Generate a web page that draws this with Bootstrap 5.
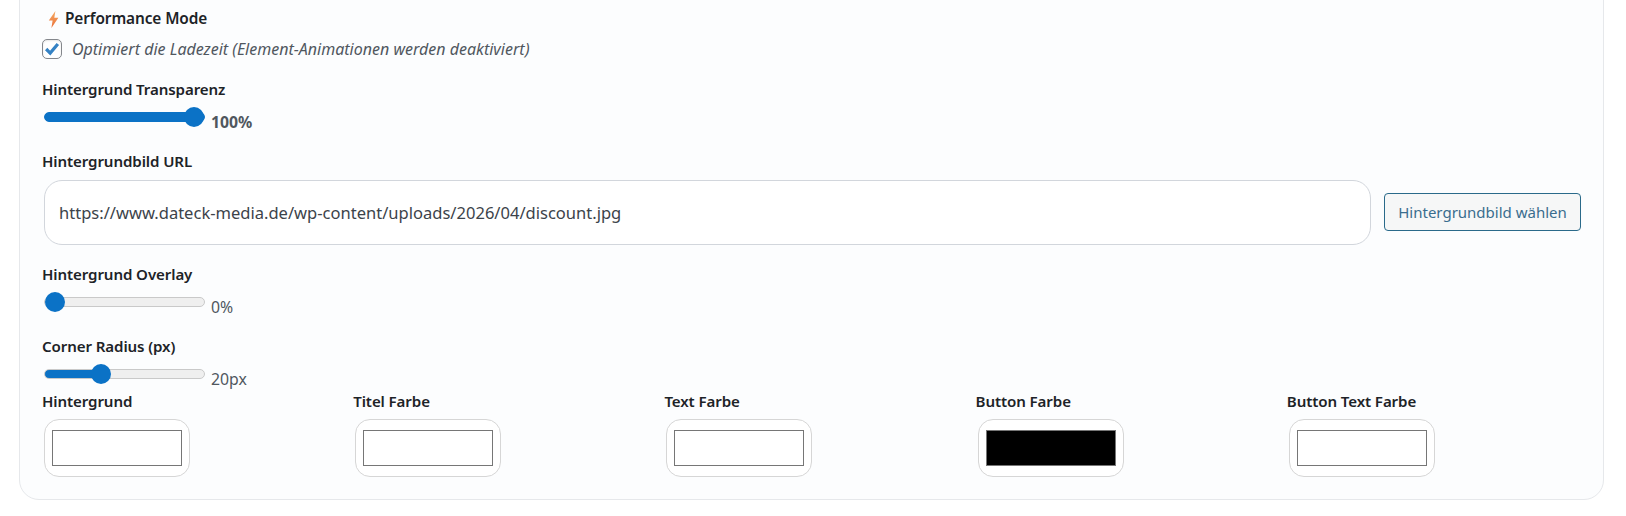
<!DOCTYPE html>
<html lang="de">
<head>
<meta charset="utf-8">
<title>Performance Mode</title>
<link rel="stylesheet" href="https://cdn.jsdelivr.net/npm/bootstrap@5.3.0/dist/css/bootstrap.min.css">
<style>
html,body{height:516px;overflow:hidden;background:#fff}
body{font-family:"Noto Sans","Open Sans","Liberation Sans",sans-serif;color:#1d2327}
.panel{margin:-20px 22px 0 19px;padding:28px 22px 22px 22px;background:#fcfdfe;border:1px solid #e6e8eb;border-radius:20px}
.fld-label{display:block;margin:0;font-size:15.1px;line-height:20px;font-weight:600;color:#1d2327;letter-spacing:-.1px}
.perf-title{display:flex;align-items:center;gap:6px;padding-left:6px;font-size:15.4px;line-height:20px;font-weight:600;letter-spacing:-.1px}
.bolt{width:11px;height:17px;display:block}
.chk-row{display:flex;align-items:center;gap:10px;margin-top:10px;height:20px}
.chk-box{appearance:none;width:20px;height:20px;margin:0;flex:none;background:#fff;border:1.5px solid #84878c;border-radius:5px;box-shadow:inset 0 1px 2px rgba(0,0,0,.1);background-image:url("data:image/svg+xml,%3Csvg xmlns='http://www.w3.org/2000/svg' viewBox='0 0 20 20'%3E%3Cpath d='M3.5 10l4.5 4.5 8.5-10' fill='none' stroke='%233582c4' stroke-width='3.6'/%3E%3C/svg%3E");background-size:100% 100%}
.chk-text{font-style:italic;font-size:16px;color:#50575e}
.gap-a{margin-top:20px}.gap-b{margin-top:24px}.gap-c{margin-top:19px}
.rng-row{display:flex;align-items:center;gap:6px;margin-top:8px;height:20px;padding-left:2px}
.rng{appearance:none;display:block;width:161px;height:20px;margin:0;background:transparent}
.rng::-webkit-slider-runnable-track{height:10px;border-radius:5px;border:1px solid #c9c9c9;background:linear-gradient(to right,#0b72c6 var(--fill),#efefef var(--fill))}
.rng::-webkit-slider-thumb{appearance:none;width:20px;height:20px;margin-top:-6px;border-radius:50%;background:#0b72c6;border:0}
.rng-full::-webkit-slider-runnable-track{border-color:#0b72c6}
.rng-val{font-size:15.8px;color:#50575e;padding-top:9px;line-height:20px;white-space:nowrap}
.rng-val.strong{font-weight:700}
.url-line{display:flex;align-items:center;gap:13px;margin-top:9px;padding-left:2px}
.url-input{flex:1 1 auto;height:65px;padding:0 14px;font-size:16.55px;color:#3c434a;background:#fff;border:1px solid #d2d6dc;border-radius:18px;box-shadow:none}
.pick-btn{flex:none;width:197px;height:38px;padding:0;margin-bottom:1px;font-size:15px;color:#3a6d8e;background:#f6f7f7;border:1px solid #2a6a8a;border-radius:4px}
.swatch-grid{display:grid;grid-template-columns:repeat(5,1fr);gap:16px;margin:7px -1px 0 0}
.swatch{display:block;width:146px;height:58px;margin:8px 0 0 2px;padding:10px 7px;background:#fff;border:1px solid #d6d6d6;border-radius:15px;cursor:pointer}
.swatch::-webkit-color-swatch-wrapper{padding:0}
.swatch::-webkit-color-swatch{border:1px solid #767676;border-radius:0}
</style>
</head>
<body>
<div class="panel">
  <div class="perf-title">
    <svg class="bolt" viewBox="0 0 11 17" aria-hidden="true"><defs><linearGradient id="bg" x1="0" y1="0" x2="0" y2="1"><stop offset="0" stop-color="#f6ab62"/><stop offset="1" stop-color="#e9703a"/></linearGradient></defs><path d="M7.4 0L0.8 9.6H4.6L3.4 17L10.4 6.8H6.3Z" fill="url(#bg)"/></svg>
    <span>Performance Mode</span>
  </div>
  <label class="chk-row">
    <input class="chk-box" type="checkbox" checked>
    <span class="chk-text">Optimiert die Ladezeit (Element-Animationen werden deaktiviert)</span>
  </label>

  <label class="fld-label gap-a">Hintergrund Transparenz</label>
  <div class="rng-row">
    <input class="rng rng-full" type="range" min="0" max="100" value="100" style="--fill:100%">
    <span class="rng-val strong">100%</span>
  </div>

  <label class="fld-label gap-b">Hintergrundbild URL</label>
  <div class="url-line">
    <input class="form-control url-input" type="text" value="https://www.dateck-media.de/wp-content/uploads/2026/04/discount.jpg">
    <button class="btn pick-btn" type="button">Hintergrundbild wählen</button>
  </div>

  <label class="fld-label gap-c">Hintergrund Overlay</label>
  <div class="rng-row">
    <input class="rng" type="range" min="0" max="100" value="0" style="--fill:0%">
    <span class="rng-val">0%</span>
  </div>

  <label class="fld-label gap-b">Corner Radius (px)</label>
  <div class="rng-row">
    <input class="rng" type="range" min="0" max="60" value="20" style="--fill:36%">
    <span class="rng-val">20px</span>
  </div>

  <div class="swatch-grid">
    <div><label class="fld-label">Hintergrund</label><input class="swatch" type="color" value="#ffffff"></div>
    <div><label class="fld-label">Titel Farbe</label><input class="swatch" type="color" value="#ffffff"></div>
    <div><label class="fld-label">Text Farbe</label><input class="swatch" type="color" value="#ffffff"></div>
    <div><label class="fld-label">Button Farbe</label><input class="swatch" type="color" value="#000000"></div>
    <div><label class="fld-label">Button Text Farbe</label><input class="swatch" type="color" value="#ffffff"></div>
  </div>
</div>
<script src="https://cdn.jsdelivr.net/npm/bootstrap@5.3.0/dist/js/bootstrap.bundle.min.js"></script>
</body>
</html>
